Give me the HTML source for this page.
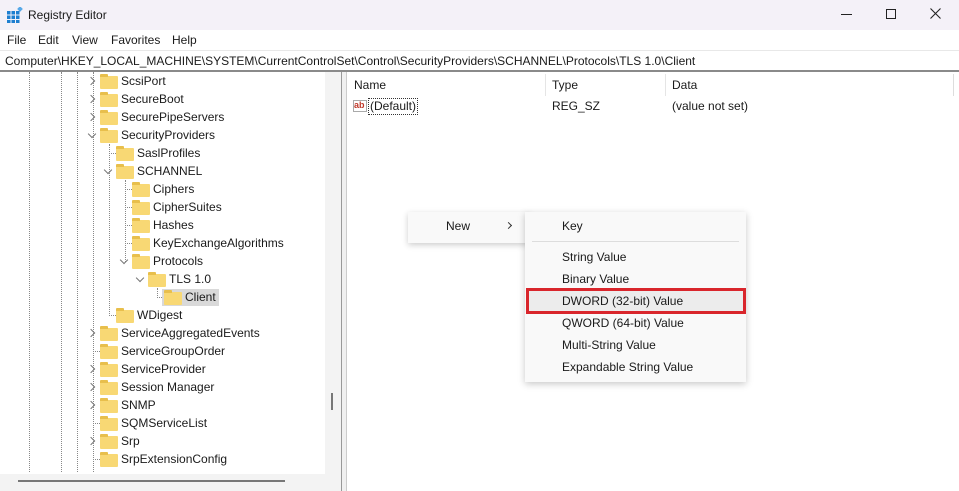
<!DOCTYPE html>
<html><head><style>
*{margin:0;padding:0;box-sizing:border-box}
body{width:959px;height:491px;overflow:hidden;background:#fff;font-family:"Liberation Sans",sans-serif;font-size:12px;color:#1a1a1a;position:relative}
.a{position:absolute;white-space:nowrap}
.row{position:absolute;height:18px;line-height:18px}
.fold{position:absolute;width:18px;height:13px;background:#f8d874;border-radius:1px}
.fold:before{content:"";position:absolute;left:0;top:-2px;width:8px;height:3px;background:#e8bf4c;border-radius:1px 1px 0 0}
.chev{position:absolute;width:6px;height:6px;border-top:1px solid #777;border-right:1px solid #777;transform:rotate(45deg)}
.chev.d{transform:rotate(135deg)}
.vd{position:absolute;border-left:1px dotted #888}
.hd{position:absolute;border-top:1px dotted #888;height:0}
.mi{position:absolute;left:37px;height:22px;line-height:22px;font-size:12px}
</style></head><body>
<div class="a" style="left:0;top:0;width:959px;height:30px;background:#f4f1f8"></div>
<svg class="a" style="left:7px;top:7px" width="16" height="16"><g fill="#1e7fd0"><rect x="0" y="4" width="3.5" height="3.5"/><rect x="4.5" y="4" width="3.5" height="3.5"/><rect x="9" y="4" width="3.5" height="3.5"/><rect x="0" y="8.5" width="3.5" height="3.5"/><rect x="4.5" y="8.5" width="3.5" height="3.5"/><rect x="9" y="8.5" width="3.5" height="3.5"/><rect x="0" y="13" width="3.5" height="3" /><rect x="4.5" y="13" width="3.5" height="3"/><rect x="9" y="13" width="3.5" height="3"/></g><rect x="11" y="0" width="4" height="4" fill="#56a8e8" transform="rotate(45 13 2)"/></svg>
<div class="a" style="left:28px;top:8px;font-size:12px">Registry Editor</div>
<div class="a" style="left:841px;top:14px;width:11px;height:1px;background:#222"></div>
<div class="a" style="left:886px;top:9px;width:10px;height:10px;border:1px solid #222"></div>
<svg class="a" style="left:930px;top:8px" width="11" height="11"><path d="M0.5 0.5L10.5 10.5M10.5 0.5L0.5 10.5" stroke="#222" stroke-width="1.1"/></svg>
<div class="a" style="left:7px;top:33px">File</div>
<div class="a" style="left:38px;top:33px">Edit</div>
<div class="a" style="left:72px;top:33px">View</div>
<div class="a" style="left:111px;top:33px">Favorites</div>
<div class="a" style="left:172px;top:33px">Help</div>
<div class="a" style="left:0;top:50px;width:959px;height:20px;border-top:1px solid #e8e8e8"></div>
<div class="a" style="left:5px;top:54px;font-size:12px">Computer\HKEY_LOCAL_MACHINE\SYSTEM\CurrentControlSet\Control\SecurityProviders\SCHANNEL\Protocols\TLS 1.0\Client</div>
<div class="a" style="left:0;top:70px;width:959px;height:2px;background:#8a8a8a"></div>
<div class="a" style="left:325px;top:72px;width:16px;height:403px;background:#f3f3f3"></div>
<div class="a" style="left:331px;top:393px;width:2px;height:17px;background:#777"></div>
<div class="a" style="left:0;top:474px;width:341px;height:17px;background:#f3f3f3"></div>
<div class="a" style="left:18px;top:480px;width:267px;height:2px;background:#777"></div>
<div class="a" style="left:341px;top:72px;width:6px;height:419px;background:#f0f0f0;border-left:1px solid #999;border-right:1px solid #ccc"></div>
<div class="vd" style="left:29px;top:72px;height:400px"></div>
<div class="vd" style="left:61px;top:72px;height:400px"></div>
<div class="vd" style="left:77px;top:72px;height:400px"></div>
<div class="vd" style="left:93px;top:72px;height:400px"></div>
<div class="vd" style="left:109px;top:144px;height:172px"></div>
<div class="vd" style="left:125px;top:180px;height:82px"></div>
<div class="vd" style="left:157px;top:288px;height:10px"></div>
<div class="hd" style="left:109px;top:153px;width:7px"></div>
<div class="hd" style="left:109px;top:315px;width:7px"></div>
<div class="hd" style="left:125px;top:189px;width:7px"></div>
<div class="hd" style="left:125px;top:207px;width:7px"></div>
<div class="hd" style="left:125px;top:225px;width:7px"></div>
<div class="hd" style="left:125px;top:243px;width:7px"></div>
<div class="hd" style="left:157px;top:297px;width:7px"></div>
<div class="hd" style="left:93px;top:351px;width:7px"></div>
<div class="hd" style="left:93px;top:423px;width:7px"></div>
<div class="hd" style="left:93px;top:459px;width:7px"></div>
<div class="a" style="left:162px;top:289px;width:57px;height:17px;background:#d9d9d9"></div>

<div class="chev" style="left:88px;top:78px"></div><div class="fold" style="left:100px;top:76px"></div><div class="row" style="left:121px;top:72px">ScsiPort</div>
<div class="chev" style="left:88px;top:96px"></div><div class="fold" style="left:100px;top:94px"></div><div class="row" style="left:121px;top:90px">SecureBoot</div>
<div class="chev" style="left:88px;top:114px"></div><div class="fold" style="left:100px;top:112px"></div><div class="row" style="left:121px;top:108px">SecurePipeServers</div>
<div class="chev d" style="left:89px;top:131px"></div><div class="fold" style="left:100px;top:130px"></div><div class="row" style="left:121px;top:126px">SecurityProviders</div>
<div class="fold" style="left:116px;top:148px"></div><div class="row" style="left:137px;top:144px">SaslProfiles</div>
<div class="chev d" style="left:105px;top:167px"></div><div class="fold" style="left:116px;top:166px"></div><div class="row" style="left:137px;top:162px">SCHANNEL</div>
<div class="fold" style="left:132px;top:184px"></div><div class="row" style="left:153px;top:180px">Ciphers</div>
<div class="fold" style="left:132px;top:202px"></div><div class="row" style="left:153px;top:198px">CipherSuites</div>
<div class="fold" style="left:132px;top:220px"></div><div class="row" style="left:153px;top:216px">Hashes</div>
<div class="fold" style="left:132px;top:238px"></div><div class="row" style="left:153px;top:234px">KeyExchangeAlgorithms</div>
<div class="chev d" style="left:121px;top:257px"></div><div class="fold" style="left:132px;top:256px"></div><div class="row" style="left:153px;top:252px">Protocols</div>
<div class="chev d" style="left:137px;top:275px"></div><div class="fold" style="left:148px;top:274px"></div><div class="row" style="left:169px;top:270px">TLS 1.0</div>
<div class="fold" style="left:164px;top:292px"></div><div class="row" style="left:185px;top:288px">Client</div>
<div class="fold" style="left:116px;top:310px"></div><div class="row" style="left:137px;top:306px">WDigest</div>
<div class="chev" style="left:88px;top:330px"></div><div class="fold" style="left:100px;top:328px"></div><div class="row" style="left:121px;top:324px">ServiceAggregatedEvents</div>
<div class="fold" style="left:100px;top:346px"></div><div class="row" style="left:121px;top:342px">ServiceGroupOrder</div>
<div class="chev" style="left:88px;top:366px"></div><div class="fold" style="left:100px;top:364px"></div><div class="row" style="left:121px;top:360px">ServiceProvider</div>
<div class="chev" style="left:88px;top:384px"></div><div class="fold" style="left:100px;top:382px"></div><div class="row" style="left:121px;top:378px">Session Manager</div>
<div class="chev" style="left:88px;top:402px"></div><div class="fold" style="left:100px;top:400px"></div><div class="row" style="left:121px;top:396px">SNMP</div>
<div class="fold" style="left:100px;top:418px"></div><div class="row" style="left:121px;top:414px">SQMServiceList</div>
<div class="chev" style="left:88px;top:438px"></div><div class="fold" style="left:100px;top:436px"></div><div class="row" style="left:121px;top:432px">Srp</div>
<div class="fold" style="left:100px;top:454px"></div><div class="row" style="left:121px;top:450px">SrpExtensionConfig</div>
<div class="a" style="left:354px;top:78px">Name</div>
<div class="a" style="left:545px;top:74px;width:1px;height:22px;background:#e5e5e5"></div>
<div class="a" style="left:552px;top:78px">Type</div>
<div class="a" style="left:665px;top:74px;width:1px;height:22px;background:#e5e5e5"></div>
<div class="a" style="left:672px;top:78px">Data</div>
<div class="a" style="left:953px;top:74px;width:1px;height:22px;background:#ddd"></div>
<div class="a" style="left:353px;top:100px;width:14px;height:12px;border:1px solid #aaa;background:#fff;font-size:9px;line-height:9px;color:#c0392b;font-weight:bold">ab</div>
<div class="a" style="left:368px;top:98px;padding:0 1px;border:1px dotted #333;line-height:15px">(Default)</div>
<div class="a" style="left:552px;top:99px">REG_SZ</div>
<div class="a" style="left:672px;top:99px">(value not set)</div>
<div class="a" style="left:408px;top:212px;width:122px;height:31px;background:#f9f9f9;box-shadow:0 2px 6px rgba(0,0,0,.2)"></div>
<div class="a" style="left:446px;top:219px">New</div>
<div class="chev" style="left:506px;top:223px;width:5px;height:5px;border-color:#333"></div>
<div class="a" style="left:525px;top:212px;width:221px;height:170px;background:#f9f9f9;box-shadow:0 2px 7px rgba(0,0,0,.22)">
<div class="mi" style="top:3px">Key</div>
<div class="a" style="left:7px;top:29px;width:207px;height:1px;background:#ddd"></div>
<div class="mi" style="top:34px">String Value</div>
<div class="mi" style="top:56px">Binary Value</div>
<div class="a" style="left:1px;top:76px;width:220px;height:26px;background:#ececec;border:3px solid #d9262c"></div>
<div class="mi" style="top:78px">DWORD (32-bit) Value</div>
<div class="mi" style="top:100px">QWORD (64-bit) Value</div>
<div class="mi" style="top:122px">Multi-String Value</div>
<div class="mi" style="top:144px">Expandable String Value</div>
</div>
</body></html>
